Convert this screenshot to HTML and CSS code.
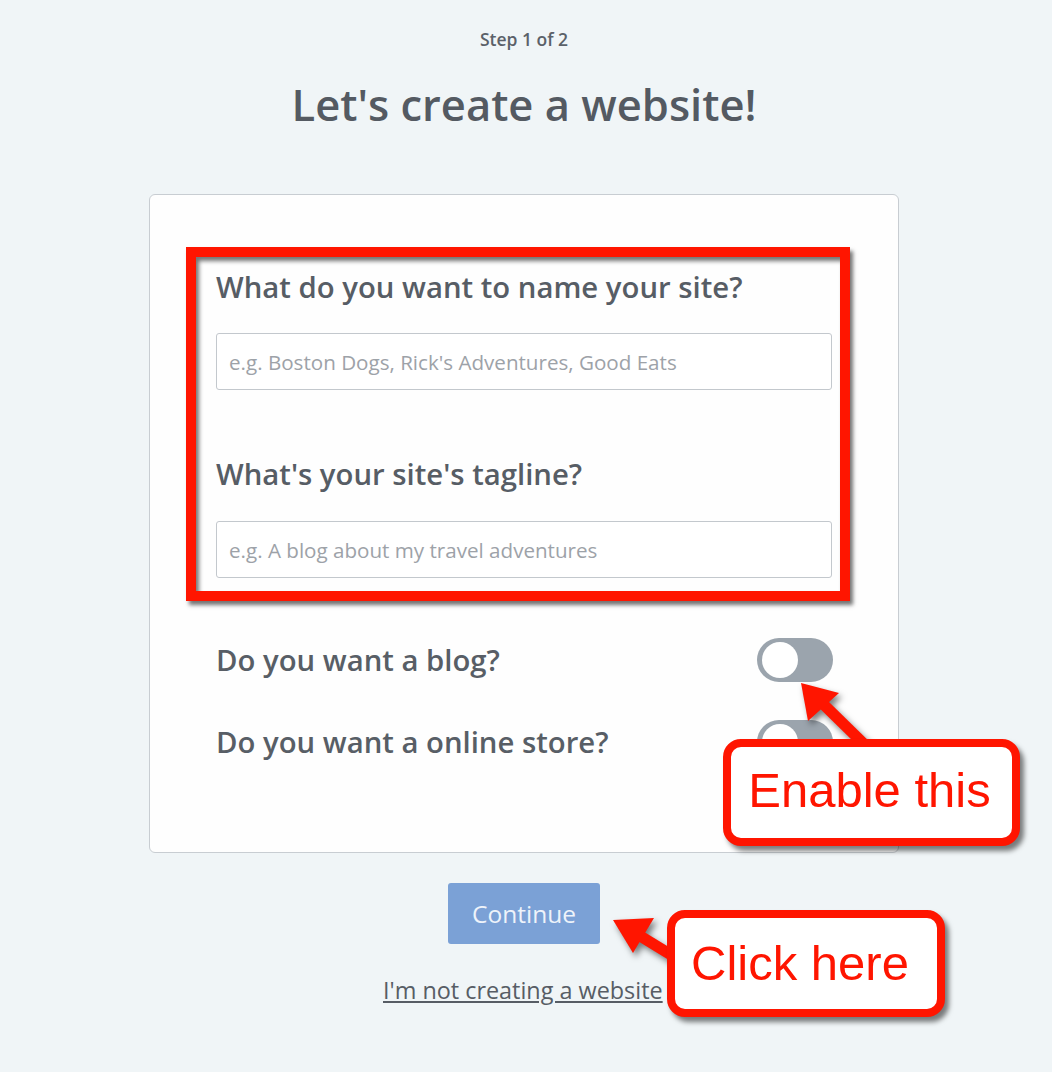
FILE: index.html
```html
<!DOCTYPE html>
<html lang="en">
<head>
<meta charset="utf-8">
<title>Let's create a website!</title>
<link rel="stylesheet" href="styles.css">
</head>
<body>
<div class="page">
  <div class="step">Step 1 of 2</div>
  <h1 class="title">Let's create a website!</h1>

  <div class="card">
    <div class="field">
      <label class="label" for="name">What do you want to name your site?</label>
      <input class="input" id="name" type="text" placeholder="e.g. Boston Dogs, Rick's Adventures, Good Eats">
    </div>
    <div class="field field-second">
      <label class="label" for="tag">What's your site's tagline?</label>
      <input class="input" id="tag" type="text" placeholder="e.g. A blog about my travel adventures">
    </div>
    <div class="row row-blog">
      <span class="row-label">Do you want a blog?</span>
      <span class="toggle"><span class="knob"></span></span>
    </div>
    <div class="row row-store">
      <span class="row-label">Do you want a online store?</span>
      <span class="toggle"><span class="knob"></span></span>
    </div>
    <div class="highlight"></div>
  </div>

  <button class="continue" type="button">Continue</button>
  <a class="skip" href="#">I'm not creating a website</a>

  <svg class="arrows" width="1052" height="1072" viewBox="0 0 1052 1072" aria-hidden="true">
    <g class="arrow">
      <line x1="818" y1="699" x2="866" y2="746" stroke="#ff1500" stroke-width="11"/>
      <polygon points="801,683 839,693 808,721" fill="#ff1500"/>
    </g>
    <g class="arrow">
      <line x1="632" y1="931" x2="686" y2="964" stroke="#ff1500" stroke-width="11"/>
      <polygon points="613,920 654,918 633,953" fill="#ff1500"/>
    </g>
  </svg>

  <div class="callout callout-enable">Enable this</div>
  <div class="callout callout-click">Click here</div>
</div>
</body>
</html>
```

FILE: styles.css
```css
* { box-sizing: border-box; }

html, body {
  margin: 0;
  padding: 0;
  background: #f0f5f7;
}

body {
  font-family: "Open Sans", "Noto Sans", sans-serif;
  color: #575d65;
}

.page {
  position: relative;
  width: 1052px;
  height: 1072px;
  padding-top: 28px;
  display: flex;
  flex-direction: column;
  align-items: flex-start;
}

.step {
  width: 1048px;
  text-align: center;
  font-size: 17.5px;
  font-weight: 600;
  line-height: 22px;
  color: #5b6169;
}

.title {
  width: 1048px;
  margin: 28px 0 0;
  text-align: center;
  font-size: 43.5px;
  font-weight: 600;
  line-height: 54px;
  color: #545a62;
}

.card {
  position: relative;
  margin: 62px 0 0 149px;
  width: 750px;
  height: 659px;
  background: #fefefe;
  border: 1px solid #c8cdd2;
  border-radius: 6px;
  padding: 72px 67px 0 66px;
}

.field {
  display: flex;
  flex-direction: column;
}

.field-second {
  margin-top: 64px;
}

.label {
  font-size: 29.3px;
  font-weight: 600;
  line-height: 40px;
  color: #575d65;
}

.input {
  margin-top: 26px;
  width: 616px;
  height: 57px;
  border: 1px solid #c3c8cd;
  border-radius: 3px;
  background: #fff;
  padding: 0 12px;
  font-family: "Open Sans", "Noto Sans", sans-serif;
  font-size: 20.6px;
  color: #575d65;
  outline: none;
}

.field-second .input {
  margin-top: 27px;
}

.input::placeholder {
  color: #9da2a8;
}

.row {
  display: flex;
  align-items: center;
  justify-content: space-between;
  width: 617px;
  height: 44px;
}

.row-blog { margin-top: 60px; }
.row-store { margin-top: 38px; }

.row-label {
  font-size: 29.3px;
  font-weight: 600;
  color: #585e66;
  line-height: 40px;
}

.toggle {
  position: relative;
  width: 76px;
  height: 44px;
  border-radius: 22px;
  background: #9ba4ad;
}

.knob {
  position: absolute;
  left: 5px;
  top: 4px;
  width: 36px;
  height: 36px;
  border-radius: 50%;
  background: #fff;
}

.highlight {
  position: absolute;
  left: 36px;
  top: 52px;
  width: 664px;
  height: 354px;
  border: 10px solid #ff1500;
  box-shadow: 3px 4px 4px rgba(0,0,0,0.55), inset 3px 4px 4px rgba(0,0,0,0.55);
}

.continue {
  margin: 30px 0 0 448px;
  width: 152px;
  height: 61px;
  border: none;
  border-radius: 3px;
  background: #7ba1d6;
  color: #eef3fa;
  font-family: "Open Sans", "Noto Sans", sans-serif;
  font-size: 24.5px;
  font-weight: 400;
  padding: 0;
}

.skip {
  margin: 31px 0 0 383px;
  font-size: 23.4px;
  line-height: 30px;
  color: #575d65;
  text-decoration: underline;
}

.arrows {
  position: absolute;
  left: 0;
  top: 0;
  pointer-events: none;
}

.arrow {
  filter: drop-shadow(3px 4px 3px rgba(0,0,0,0.5));
}

.callout {
  position: absolute;
  border: 8px solid #ff1500;
  border-radius: 18px;
  background: #fff;
  color: #ff1500;
  font-family: "Liberation Sans", Arial, sans-serif;
  font-size: 49px;
  line-height: 1;
  display: flex;
  align-items: center;
  justify-content: center;
  box-shadow: 4px 5px 5px rgba(0,0,0,0.5);
}

.callout-enable {
  left: 723px;
  top: 739px;
  width: 297px;
  height: 107px;
  padding: 0 4px 4px 0;
}

.callout-click {
  left: 667px;
  top: 910px;
  width: 278px;
  height: 107px;
  padding: 0 12px 0 0;
}
```
